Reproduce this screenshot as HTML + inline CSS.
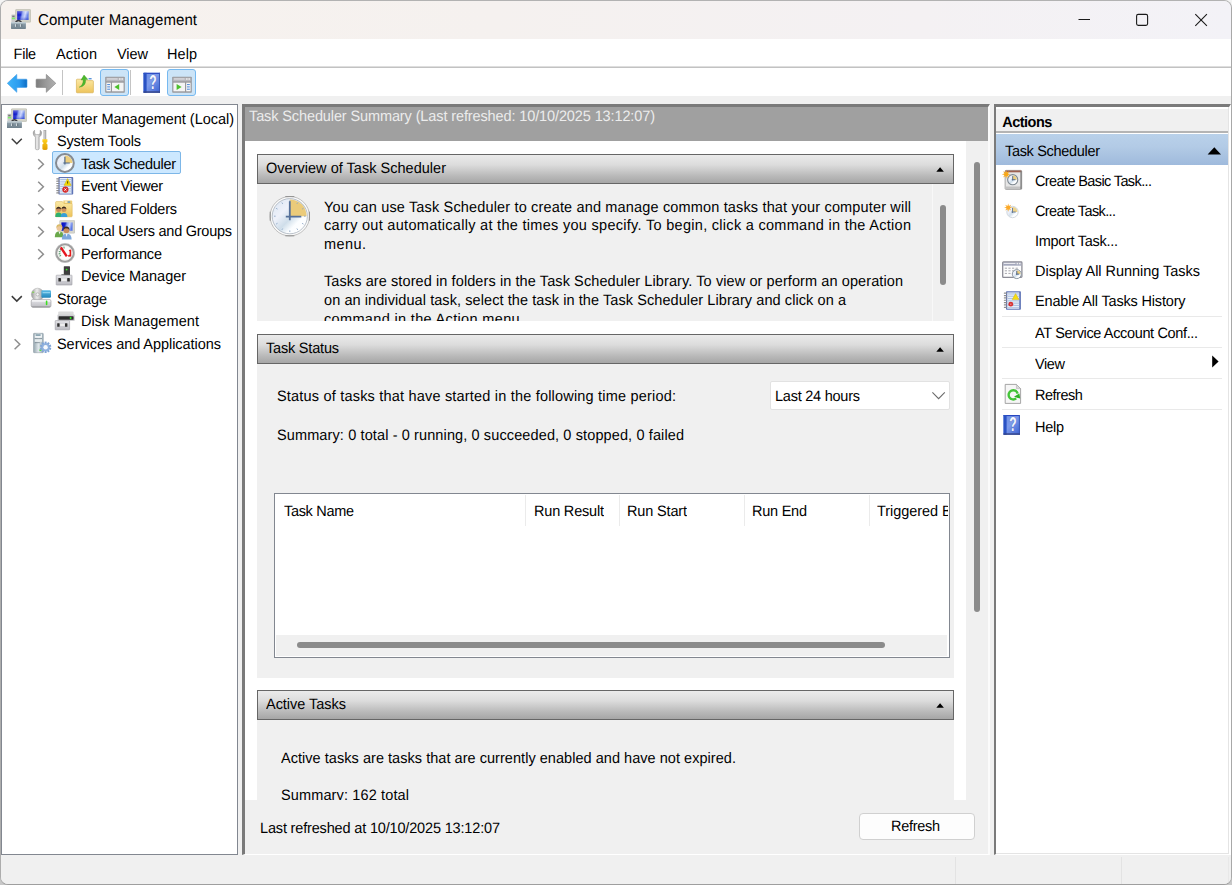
<!DOCTYPE html>
<html lang="en">
<head>
<meta charset="utf-8">
<title>Computer Management</title>
<style>
*{box-sizing:border-box;margin:0;padding:0}
html,body{width:1232px;height:885px;overflow:hidden;background:linear-gradient(180deg,#f4f4f4 0%,#f0f0f0 50%,#c8c8c8 100%)}
body{font-family:"Liberation Sans",sans-serif;font-size:14.5px;color:#000;position:relative}
#win{position:absolute;left:0;top:0;width:1232px;height:885px;border:1px solid;border-color:#b2b2b2 #a8a8a8 #9e9e9e #adadad;border-radius:8px;overflow:hidden;background:#f0f0f0}
#inner{position:absolute;left:-1px;top:-1px;width:1232px;height:885px}
.a{position:absolute}
.t{position:absolute;white-space:pre;line-height:20px;height:20px;text-rendering:geometricPrecision;transform:scaleY(1.04);transform-origin:0 15.02px}
#titlebar{left:0;top:0;width:1232px;height:39px;background:linear-gradient(90deg,#f7f2ee 0%,#f5f1ef 40%,#f4f1f3 75%,#f3f2f7 100%)}
#menubar{left:0;top:39px;width:1232px;height:27px;background:#fff}
#menuline{left:0;top:66px;width:1232px;height:2px;background:linear-gradient(180deg,#dedede 0,#dedede 50%,#c2c2c2 50%,#c2c2c2 100%)}
#toolbar{left:0;top:68px;width:1232px;height:28px;background:#fff}
.tbsep{width:1px;background:#c4c4c4;top:70px;height:25px}
.tbhot{top:69px;height:27px;width:29px;background:#cce4f7;border:1px solid #76b9f0;border-radius:3px}
#left{left:1px;top:104px;width:237px;height:751px;background:#fff;border:1px solid #828790}
#sel{left:52px;top:151px;width:129px;height:23px;background:#cce8ff;border:1px solid #7db7e8;border-radius:2px}
#center{left:242px;top:104px;width:748px;height:751px;background:#f0f0f0;border-top:3px solid #7a7a7a;border-left:3px solid #7a7a7a;border-right:2px solid #fbfbfb;border-bottom:1px solid #fff}
#chead{left:245px;top:107px;width:742.5px;height:34px;background:#a0a0a0}
#cwhite{left:245px;top:141px;width:721px;height:659px;background:#fff}
.sech{left:257px;width:697px;height:30px;border:1px solid #666;background:linear-gradient(180deg,#ebebeb 0%,#dcdcdc 35%,#b9b9b9 75%,#a6a6a6 100%)}
.secb{left:257px;width:697px;background:#f0f0f0}
.tri{width:0;height:0;border-left:3.7px solid transparent;border-right:3.7px solid transparent;border-bottom:4px solid #000}
.thumb{background:#8b8b8b;border-radius:3px}
#combo{left:770px;top:380.5px;width:180px;height:29.5px;background:#fff;border:1px solid #e2e2e2;border-radius:2px}
#list{left:274px;top:493px;width:676px;height:165px;background:#fff;border:1px solid #828790}
.colsep{top:495px;width:1px;height:31px;background:#ebebeb}
#btn{left:859px;top:813px;width:116px;height:27px;background:#fdfdfd;border:1px solid #d0d0d0;border-radius:4px}
#right{left:994px;top:104px;width:237px;height:751px;background:#fff;border-top:3px solid #7a7a7a;border-left:2px solid #7a7a7a;border-right:2px solid #fff;border-bottom:1px solid #fff}
#rinner{left:996px;top:107px;width:233px;height:747px;border-right:1px solid #e4e4e4;border-bottom:1px solid #e4e4e4}
#ahead{left:996px;top:109px;width:232px;height:22px;background:#f0f0f0}
#aline{left:996px;top:131px;width:232px;height:2px;background:#b4b4b4}
#asub{left:996px;top:134px;width:232px;height:31px;background:linear-gradient(180deg,#b9d1ea 0%,#b3cbe6 40%,#9fbadc 100%)}
.asep{left:1002px;width:220px;height:1px;background:#e9e9e9}
#status{left:0;top:855px;width:1232px;height:30px;background:#f0f0f0}
.stsep{top:857px;width:1px;height:27px;background:#e3e3e3}
svg{position:absolute;overflow:visible}
</style>
</head>
<body>
<div id="win">
<div id="inner">
<div class="a" id="titlebar"></div>
<div class="a" id="menubar"></div>
<div class="a" id="menuline"></div>
<div class="a" id="toolbar"></div>
<div class="a tbsep" style="left:62px"></div>
<div class="a tbhot" style="left:100px"></div>
<div class="a tbsep" style="left:130px"></div>
<div class="a tbhot" style="left:167px"></div>

<div class="a" id="left"></div>
<div class="a" id="sel"></div>

<div class="a" id="center"></div>
<div class="a" id="chead"></div>
<div class="a" id="cwhite"></div>
<div class="a sech" style="top:154px"></div>
<div class="a secb" style="top:184px;height:137px"></div>
<div class="a sech" style="top:334px"></div>
<div class="a secb" style="top:364px;height:314px"></div>
<div class="a sech" style="top:690px"></div>
<div class="a secb" style="top:720px;height:80px"></div>
<div class="a" style="left:932px;top:184px;width:1px;height:137px;background:#f8f8f8"></div>
<div class="a thumb" style="left:940px;top:205px;width:6px;height:80px"></div>
<div class="a thumb" style="left:974px;top:162px;width:6px;height:449.5px"></div>
<div class="a" id="combo"></div>
<div class="a" id="list"></div>
<div class="a" style="left:276px;top:635px;width:671px;height:21px;background:#f0f0f0"></div>
<div class="a thumb" style="left:297px;top:642px;width:588px;height:6px"></div>
<div class="a colsep" style="left:525px"></div>
<div class="a colsep" style="left:619px"></div>
<div class="a colsep" style="left:744px"></div>
<div class="a colsep" style="left:869px"></div>
<div class="a" id="btn"></div>

<div class="a" id="right"></div>
<div class="a" id="rinner"></div>
<div class="a" id="ahead"></div>
<div class="a" id="aline"></div>
<div class="a" id="asub"></div>
<div class="a asep" style="top:316px"></div>
<div class="a asep" style="top:347px"></div>
<div class="a asep" style="top:378px"></div>
<div class="a asep" style="top:409px"></div>

<div class="a" id="status"></div>
<div class="a stsep" style="left:955px"></div>
<div class="a stsep" style="left:1121px"></div>
<div class="a stsep" style="left:1228px;background:#e8e8e8"></div>
<svg class="a" style="left:0;top:0" width="1232" height="885" viewBox="0 0 1232 885"><defs>
<linearGradient id="gScreen" x1="0" y1="0" x2="1" y2="0.2"><stop offset="0" stop-color="#0608c4"/><stop offset="0.36" stop-color="#1624cc"/><stop offset="0.52" stop-color="#8ea2f0"/><stop offset="0.74" stop-color="#ccd6fc"/><stop offset="1" stop-color="#5a78e6"/></linearGradient>
<linearGradient id="gScreenV" x1="0" y1="0" x2="0" y2="1"><stop offset="0" stop-color="#ffffff" stop-opacity="0.35"/><stop offset="0.45" stop-color="#ffffff" stop-opacity="0"/><stop offset="1" stop-color="#0010c0" stop-opacity="0.45"/></linearGradient>
<linearGradient id="gBox" x1="0" y1="0" x2="0" y2="1"><stop offset="0" stop-color="#b4c2ca"/><stop offset="0.3" stop-color="#8a9ba6"/><stop offset="1" stop-color="#6f808c"/></linearGradient>
<linearGradient id="gBack" x1="0" y1="0" x2="1" y2="0"><stop offset="0" stop-color="#3fb4f8"/><stop offset="0.6" stop-color="#2a9cf0"/><stop offset="1" stop-color="#0c6cc4"/></linearGradient>
<linearGradient id="gFwd" x1="0" y1="0" x2="1" y2="0"><stop offset="0" stop-color="#7c7c7c"/><stop offset="0.5" stop-color="#9a9a9a"/><stop offset="1" stop-color="#b0b0b0"/></linearGradient>
<linearGradient id="gFolder" x1="0" y1="0" x2="0" y2="1"><stop offset="0" stop-color="#fbe9a4"/><stop offset="1" stop-color="#eec45c"/></linearGradient>
<linearGradient id="gHelp" x1="0" y1="0" x2="1" y2="1"><stop offset="0" stop-color="#6a8ce4"/><stop offset="0.45" stop-color="#7c9aea"/><stop offset="1" stop-color="#3a60d2"/></linearGradient>
<linearGradient id="gFace" x1="0.1" y1="0.1" x2="0.9" y2="0.9"><stop offset="0" stop-color="#dfe8f4"/><stop offset="0.3" stop-color="#eef1fa"/><stop offset="0.55" stop-color="#cfdeea"/><stop offset="0.75" stop-color="#fbfdff"/><stop offset="1" stop-color="#ffffff"/></linearGradient>
<linearGradient id="gMetal" x1="0" y1="0" x2="1" y2="0"><stop offset="0" stop-color="#9a9a9a"/><stop offset="0.45" stop-color="#eeeeee"/><stop offset="1" stop-color="#8e8e8e"/></linearGradient>
<linearGradient id="gYel" x1="0" y1="0" x2="0" y2="1"><stop offset="0" stop-color="#ffd21c"/><stop offset="1" stop-color="#e09c00"/></linearGradient>
<linearGradient id="gGrey" x1="0" y1="0" x2="0" y2="1"><stop offset="0" stop-color="#e4e4e8"/><stop offset="1" stop-color="#bcbcc2"/></linearGradient>
<linearGradient id="gBlueDrv" x1="0" y1="0" x2="0" y2="1"><stop offset="0" stop-color="#5bbbe6"/><stop offset="1" stop-color="#2386ba"/></linearGradient>
<linearGradient id="gTower" x1="0" y1="0" x2="1" y2="0"><stop offset="0" stop-color="#93a4ae"/><stop offset="0.5" stop-color="#dfe7ea"/><stop offset="1" stop-color="#9aaab4"/></linearGradient>
</defs><g transform="translate(11,9)">
<rect x="0.4" y="5.6" width="4" height="8" rx="0.6" fill="#c9cacb"/>
<rect x="1.2" y="6.6" width="2.4" height="1.6" fill="#7a7a7a"/>
<rect x="0.9" y="8.7" width="3.2" height="1.5" fill="#7cf068"/>
<rect x="4.3" y="0.2" width="15.5" height="13.3" rx="0.8" fill="#bcbcae"/>
<rect x="5" y="0.9" width="14.1" height="11.9" rx="0.5" fill="#d2d2c8"/>
<rect x="6.2" y="2.2" width="11.4" height="8.6" fill="url(#gScreen)"/>
<rect x="6.2" y="2.2" width="11.4" height="8.6" fill="url(#gScreenV)"/>
<path d="M4.4 13.4 Q7.4 9.6 10.6 13.4" fill="none" stroke="#3a3a40" stroke-width="1.4"/>
<rect x="0" y="13" width="14.9" height="6.9" rx="0.6" fill="url(#gBox)"/>
<rect x="0" y="13.1" width="14.9" height="1.2" fill="#c3d0d6"/>
<rect x="4" y="15.2" width="1.3" height="2.6" fill="#cfd8dc"/><rect x="5.3" y="15.2" width="0.9" height="2.6" fill="#5c6a74"/>
<rect x="9" y="15.2" width="1.3" height="2.6" fill="#cfd8dc"/><rect x="10.3" y="15.2" width="0.9" height="2.6" fill="#5c6a74"/>
</g>
<g transform="translate(7,108.2)">
<rect x="0.4" y="5.6" width="4" height="8" rx="0.6" fill="#c9cacb"/>
<rect x="1.2" y="6.6" width="2.4" height="1.6" fill="#7a7a7a"/>
<rect x="0.9" y="8.7" width="3.2" height="1.5" fill="#7cf068"/>
<rect x="4.3" y="0.2" width="15.5" height="13.3" rx="0.8" fill="#bcbcae"/>
<rect x="5" y="0.9" width="14.1" height="11.9" rx="0.5" fill="#d2d2c8"/>
<rect x="6.2" y="2.2" width="11.4" height="8.6" fill="url(#gScreen)"/>
<rect x="6.2" y="2.2" width="11.4" height="8.6" fill="url(#gScreenV)"/>
<path d="M4.4 13.4 Q7.4 9.6 10.6 13.4" fill="none" stroke="#3a3a40" stroke-width="1.4"/>
<rect x="0" y="13" width="14.9" height="6.9" rx="0.6" fill="url(#gBox)"/>
<rect x="0" y="13.1" width="14.9" height="1.2" fill="#c3d0d6"/>
<rect x="4" y="15.2" width="1.3" height="2.6" fill="#cfd8dc"/><rect x="5.3" y="15.2" width="0.9" height="2.6" fill="#5c6a74"/>
<rect x="9" y="15.2" width="1.3" height="2.6" fill="#cfd8dc"/><rect x="10.3" y="15.2" width="0.9" height="2.6" fill="#5c6a74"/>
</g>
<path d="M1078.5 19.5 L1090 19.5" stroke="#1a1a1a" stroke-width="1.1"/>
<rect x="1136.6" y="14.4" width="11" height="11" rx="1.6" fill="none" stroke="#1a1a1a" stroke-width="1.1"/>
<path d="M1195.3 14.2 L1206.9 25.8 M1206.9 14.2 L1195.3 25.8" stroke="#1a1a1a" stroke-width="1.1"/>
<path transform="translate(7,74)" d="M0.3 9.3 L9.8 0.4 L9.8 5.2 L19.3 5.2 Q20 5.2 20 5.9 L20 12.7 Q20 13.4 19.3 13.4 L9.8 13.4 L9.8 18.3 Z" fill="url(#gBack)" stroke="#3a9be8" stroke-width="0.6" stroke-linejoin="round"/>
<path transform="translate(36,74)" d="M19.8 9.3 L10.3 0.4 L10.3 5.2 L0.8 5.2 Q0.1 5.2 0.1 5.9 L0.1 12.7 Q0.1 13.4 0.8 13.4 L10.3 13.4 L10.3 18.3 Z" fill="url(#gFwd)" stroke="#7e7e7e" stroke-width="0.6" stroke-linejoin="round"/>
<g transform="translate(76,74.6)">
<path d="M0.4 5.4 Q0.4 4.6 1.2 4.6 L6.4 4.6 L7.6 6 L16.6 6 Q17.4 6 17.4 6.8 L17.4 17.4 Q17.4 18.2 16.6 18.2 L1.2 18.2 Q0.4 18.2 0.4 17.4 Z" fill="url(#gFolder)" stroke="#d4aa48" stroke-width="0.6"/>
<rect x="12.6" y="3.4" width="3" height="1.4" fill="#5a94d8"/>
<path d="M3.2 12.6 Q7.4 10.6 7.2 5.2 L5 5.4 L8 0.4 L11.8 4.8 L9.6 5 Q10 12 3.2 12.6 Z" fill="#4cb82c" stroke="#3a9a20" stroke-width="0.4"/>
</g>
<g transform="translate(105,76.5)">
<rect x="0.2" y="0.2" width="19.6" height="16" rx="0.8" fill="#98989c"/>
<rect x="1.2" y="1.2" width="17.6" height="3.6" fill="#b8b8be"/>
<rect x="2" y="2" width="10.6" height="0.9" fill="#e8e8ec"/>
<rect x="14" y="1.8" width="1.6" height="1.4" fill="#eeeeee"/><rect x="16.4" y="1.8" width="1.6" height="1.4" fill="#eeeeee"/>
<rect x="1.4" y="6.2" width="4.4" height="8.6" fill="#f8f8f8"/><rect x="2.2" y="7.6" width="2.8" height="1" fill="#4a86d8"/><rect x="2.2" y="9.9" width="2.8" height="1" fill="#4a86d8"/><rect x="2.2" y="12.2" width="2.8" height="1" fill="#4a86d8"/><rect x="7" y="6.2" width="11.6" height="8.6" fill="#f4f4f4"/><path d="M14.2 7.4 L14.2 13.6 L9.4 10.5 Z" fill="#4cc02c"/>
</g>
<g transform="translate(143.5,72.8)">
<rect x="0" y="0" width="16.5" height="20" rx="0.8" fill="url(#gHelp)"/>
<rect x="0" y="0" width="16.5" height="1.1" fill="#2846c0"/>
<rect x="0" y="0" width="3.1" height="20" fill="#2a52c4"/>
<rect x="15.5" y="0" width="1" height="20" fill="#3a58b8"/>
<rect x="0" y="18.5" width="16.5" height="1.5" fill="#36478c"/>
<text transform="translate(9.45,16.6) scale(0.8,1.32)" text-anchor="middle" font-family="Liberation Sans, sans-serif" font-weight="700" font-size="15" fill="#f4f6fd" style="paint-order:stroke" stroke="#4a62b4" stroke-width="0.5">?</text>
</g>
<g transform="translate(172,76.5)">
<rect x="0.2" y="0.2" width="19.6" height="16" rx="0.8" fill="#98989c"/>
<rect x="1.2" y="1.2" width="17.6" height="3.6" fill="#b8b8be"/>
<rect x="2" y="2" width="10.6" height="0.9" fill="#e8e8ec"/>
<rect x="14" y="1.8" width="1.6" height="1.4" fill="#eeeeee"/><rect x="16.4" y="1.8" width="1.6" height="1.4" fill="#eeeeee"/>
<rect x="14.2" y="6.2" width="4.4" height="8.6" fill="#f8f8f8"/><rect x="15" y="7.6" width="2.8" height="1" fill="#4a86d8"/><rect x="15" y="9.9" width="2.8" height="1" fill="#4a86d8"/><rect x="15" y="12.2" width="2.8" height="1" fill="#4a86d8"/><rect x="1.4" y="6.2" width="11.6" height="8.6" fill="#f4f4f4"/><path d="M4.6 7.4 L4.6 13.6 L9.6 10.5 Z" fill="#4cc02c"/>
</g>
<path d="M11.8 138.7 L16.8 143.7 L21.8 138.7" fill="none" stroke="#3c3c3c" stroke-width="1.5"/>
<path d="M11.8 296.1 L16.8 301.1 L21.8 296.1" fill="none" stroke="#3c3c3c" stroke-width="1.5"/>
<path d="M38.199999999999996 159.2 L43.4 164.2 L38.199999999999996 169.2" fill="none" stroke="#8e8e8e" stroke-width="1.5"/>
<path d="M38.199999999999996 181.7 L43.4 186.7 L38.199999999999996 191.7" fill="none" stroke="#8e8e8e" stroke-width="1.5"/>
<path d="M38.199999999999996 204.2 L43.4 209.2 L38.199999999999996 214.2" fill="none" stroke="#8e8e8e" stroke-width="1.5"/>
<path d="M38.199999999999996 226.7 L43.4 231.7 L38.199999999999996 236.7" fill="none" stroke="#8e8e8e" stroke-width="1.5"/>
<path d="M38.199999999999996 249.2 L43.4 254.2 L38.199999999999996 259.2" fill="none" stroke="#8e8e8e" stroke-width="1.5"/>
<path d="M14.6 339.2 L19.8 344.2 L14.6 349.2" fill="none" stroke="#8e8e8e" stroke-width="1.5"/>
<g transform="translate(33,130)">
<path d="M2.4 7.2 L2.4 18.6 Q2.4 19.8 4.3 19.8 Q6.2 19.8 6.2 18.6 L6.2 7.2 Q8.8 5.6 8.6 2.6 Q8.4 1 7.2 0.2 L7.2 3.4 L5.6 4.6 L3.2 4.6 L1.6 3.4 L1.6 0.2 Q0.2 1.2 0.2 3 Q0.2 5.8 2.4 7.2 Z" fill="url(#gMetal)" stroke="#8a8a8a" stroke-width="0.5"/>
<rect x="10.9" y="0.2" width="2.1" height="9.2" fill="url(#gMetal)" stroke="#8a8a8a" stroke-width="0.4"/>
<path d="M9.4 9.2 L14.4 9.2 L14.4 12 L13.4 12.8 L13.4 13.6 L14.5 14.4 L14.5 19 Q14.5 19.9 12 19.9 Q9.4 19.9 9.4 19 L9.4 14.4 L10.5 13.6 L10.5 12.8 L9.4 12 Z" fill="url(#gYel)"/>
</g>
<g transform="translate(64.9,163)">
<circle r="8.9" fill="url(#gFace)" stroke="#858b93" stroke-width="2"/>
<path d="M0 0 L0 -7.6000000000000005 A7.6000000000000005 7.6000000000000005 0 0 1 7.6000000000000005 0 Z" fill="#edce7c"/>
<path d="M0 -6.32 L0 1.422 M-1.58 0 L4.898000000000001 0" stroke="#4f6787" stroke-width="1.2" fill="none"/>
</g>
<g transform="translate(56,176.6)">
<rect x="2.4" y="0.3" width="14.8" height="17.7" rx="0.8" fill="#5f74b6"/>
<rect x="3.6" y="1.4" width="11.9" height="15.700000000000001" fill="#e8eef8"/>
<rect x="4.2" y="2.4" width="11.3" height="1.1" fill="#aec2e2"/><rect x="4.2" y="4.7" width="11.3" height="1.1" fill="#aec2e2"/><rect x="4.2" y="7.0" width="11.3" height="1.1" fill="#aec2e2"/><rect x="4.2" y="9.3" width="11.3" height="1.1" fill="#aec2e2"/><rect x="4.2" y="11.6" width="11.3" height="1.1" fill="#aec2e2"/><rect x="4.2" y="13.9" width="11.3" height="1.1" fill="#aec2e2"/><rect x="4.2" y="16.2" width="11.3" height="1.1" fill="#aec2e2"/><rect x="0.2" y="1.60" width="3.4" height="1.2" rx="0.6" fill="#8a8a8e"/><rect x="0.2" y="3.95" width="3.4" height="1.2" rx="0.6" fill="#8a8a8e"/><rect x="0.2" y="6.30" width="3.4" height="1.2" rx="0.6" fill="#8a8a8e"/><rect x="0.2" y="8.65" width="3.4" height="1.2" rx="0.6" fill="#8a8a8e"/><rect x="0.2" y="11.00" width="3.4" height="1.2" rx="0.6" fill="#8a8a8e"/><rect x="0.2" y="13.35" width="3.4" height="1.2" rx="0.6" fill="#8a8a8e"/><rect x="0.2" y="15.70" width="3.4" height="1.2" rx="0.6" fill="#8a8a8e"/>
<path d="M11.6 2 L15.2 8.8 L8 8.8 Z" fill="#f4d800" stroke="#c8a800" stroke-width="0.4"/><rect x="11.2" y="4.6" width="0.9" height="2.4" fill="#4a4000"/><circle cx="9.4" cy="13" r="3.1" fill="#d62a2a"/><path d="M8.3 11.9 L10.5 14.1 M10.5 11.9 L8.3 14.1" stroke="#fff" stroke-width="0.9"/>
</g>
<g transform="translate(55,200)">
<path d="M8.4 0.4 L16.4 0.4 Q17.2 0.4 17.2 1.2 L17.2 4 L8.4 4 Z" fill="#f0cf74"/>
<rect x="9.8" y="1.4" width="2.6" height="1.3" fill="#fff7e0"/><rect x="12.6" y="1.4" width="2.6" height="1.3" fill="#4f92d8"/>
<path d="M0.6 2.4 Q0.6 1.6 1.4 1.6 L7.4 1.6 L8.8 3.4 L16.4 3.4 Q17.2 3.4 17.2 4.2 L17.2 16 Q17.2 16.8 16.4 16.8 L1.4 16.8 Q0.6 16.8 0.6 16 Z" fill="url(#gFolder)" stroke="#d9b04c" stroke-width="0.5"/>
<path d="M0.3 17 Q0.3 12.6 3.6 12.6 Q7 12.6 7 17 Z" fill="#2fb070"/>
<path d="M5.6 17 Q5.6 12.9 9 12.9 Q12.4 12.9 12.4 17 Z" fill="#3a9fd8"/>
<circle cx="3.6" cy="9.6" r="2.5" fill="#c98a5a"/><path d="M1.1 9.2 Q1.4 6.6 3.6 6.7 Q5.9 6.6 6.1 9.2 Q3.6 7.9 1.1 9.2 Z" fill="#3a2a20"/>
<circle cx="8.9" cy="9.4" r="2.5" fill="#cf935f"/><path d="M6.4 9 Q6.7 6.4 8.9 6.5 Q11.2 6.4 11.4 9 Q8.9 7.7 6.4 9 Z" fill="#3a2a20"/>
</g>
<g transform="translate(55,220)">
<rect x="4.4" y="0.2" width="15.6" height="13.2" rx="0.8" fill="#c4c4bc"/>
<rect x="5" y="0.8" width="14.4" height="12" rx="0.5" fill="#d6d6ce"/>
<rect x="6.4" y="2.4" width="11.2" height="8.4" fill="url(#gScreen)"/>
<path d="M-0.2 17.2 Q-0.2 11.2 4.2 11.2 Q8.6 11.2 8.6 17.2 Z" fill="#6aa84a"/>
<path d="M3.6 11.4 L4.6 14.6 L5.6 11.4 Z" fill="#f4f4f4"/>
<circle cx="4.4" cy="8" r="2.9" fill="#ecc79a"/><path d="M1.4 8 Q1 4.2 4.4 4.2 Q7.8 4.2 7.4 8 Q6 5.8 4.4 6.2 Q2.6 5.8 1.4 8 Z" fill="#d9bb6a"/>
<path d="M6.8 19.4 Q6.8 13.4 11.6 13.4 Q16.6 13.4 16.6 19.4 Z" fill="#7da7dc"/>
<path d="M10.6 13.6 L11.6 17 L12.6 13.6 Z" fill="#f4f4f4"/>
<circle cx="11.4" cy="10.2" r="2.9" fill="#c98c5c"/><path d="M8.4 10 Q8.2 6.4 11.4 6.4 Q14.6 6.4 14.4 10 Q13 8 11.4 8.4 Q9.8 8 8.4 10 Z" fill="#3c2c22"/>
</g>
<g transform="translate(65,253)">
<circle r="8.7" fill="#fdfdfb" stroke="#9c9c9c" stroke-width="2.2"/>
<circle r="9.6" fill="none" stroke="#c4c4c4" stroke-width="0.6"/>
<circle r="7.3" fill="none" stroke="#e6e6e2" stroke-width="0.8"/>
<path d="M-3.98 2.30 L-5.54 3.20" stroke="#5f9f74" stroke-width="1.1"/><path d="M-4.56 0.64 L-6.34 0.89" stroke="#5f9f74" stroke-width="1.1"/><path d="M-4.46 -1.11 L-6.21 -1.55" stroke="#5f9f74" stroke-width="1.1"/><path d="M-3.72 -2.70 L-5.18 -3.76" stroke="#5f9f74" stroke-width="1.1"/><path d="M-2.44 -3.90 L-3.39 -5.43" stroke="#5f9f74" stroke-width="1.1"/><path d="M-0.80 -4.53 L-1.11 -6.30" stroke="#5f9f74" stroke-width="1.1"/>
<path d="M3.6 -3 L6.2 -3.4 L6.2 3.4 L3.2 3.8 L3.2 2 L4.6 1.8 L4.6 -1.4 Z" fill="#e01c1c"/>
<path d="M-4.2 -5.6 L1.8 3.4" stroke="#e6161e" stroke-width="2.4"/>
</g>
<g transform="translate(56,266)">
<rect x="7.8" y="0.2" width="6.2" height="9.4" rx="0.5" fill="#3e3e3e"/>
<rect x="5.4" y="8.2" width="3" height="1.4" fill="#6a6a6a"/>
<circle cx="10.6" cy="3.6" r="0.9" fill="#38f028"/>
<rect x="0.2" y="9.2" width="15.8" height="9.8" rx="0.5" fill="url(#gGrey)" stroke="#9c9ca2" stroke-width="0.6"/>
<rect x="2.4" y="12" width="2.6" height="3.6" rx="0.4" fill="#303030"/>
<rect x="11.2" y="12" width="2.6" height="3.6" rx="0.4" fill="#303030"/>
<rect x="5.6" y="12.6" width="5" height="2.4" fill="#eeeeee"/>
</g>
<g transform="translate(31,288)">
<circle cx="6.6" cy="6.4" r="6.2" fill="url(#gMetal)" stroke="#a4a4a4" stroke-width="0.5"/>
<circle cx="6.6" cy="6.4" r="1.6" fill="#f6f6f6" stroke="#8e8e8e" stroke-width="0.5"/>
<rect x="1.2" y="3.6" width="2" height="1.4" fill="#8ad060"/>
<rect x="10.4" y="2.2" width="9.6" height="7.6" rx="1.2" fill="url(#gBlueDrv)"/>
<rect x="11.6" y="4.2" width="7.6" height="1" fill="#9fdaf2"/>
<rect x="0.2" y="11.4" width="19.8" height="8" rx="1.8" fill="url(#gGrey)" stroke="#9a9a9e" stroke-width="0.6"/>
<rect x="0.8" y="12" width="18.6" height="1.8" rx="0.9" fill="#f2f2f4"/>
<rect x="0.8" y="18" width="18.6" height="1.2" rx="0.6" fill="#a4a4a8"/>
<rect x="14.8" y="12.6" width="1.6" height="4.6" rx="0.8" fill="#3ce020"/>
</g>
<g transform="translate(55,311)">
<rect x="3.2" y="0.4" width="15.4" height="9.4" rx="1" fill="#dcdcdc"/>
<rect x="2.4" y="3.4" width="17.4" height="6.6" rx="1" fill="#cfcfd2"/>
<rect x="3.6" y="5.2" width="15" height="3.6" rx="0.6" fill="#2c2c2c"/>
<circle cx="15.6" cy="7" r="1" fill="#30f020"/>
<rect x="0.2" y="9.6" width="14.4" height="9.2" rx="0.5" fill="url(#gGrey)" stroke="#9c9ca2" stroke-width="0.6"/>
<rect x="2.2" y="12.2" width="2.4" height="3.6" rx="0.4" fill="#303030"/>
<rect x="10" y="12.2" width="2.4" height="3.6" rx="0.4" fill="#303030"/>
<rect x="5.2" y="13" width="4.4" height="2" fill="#eeeeee"/>
</g>
<g transform="translate(33,333)">
<rect x="0.5" y="0.3" width="9.8" height="19.4" rx="0.6" fill="url(#gTower)" stroke="#8896a0" stroke-width="0.5"/>
<rect x="1.8" y="1.2" width="7.2" height="3.6" fill="#eef2f4"/><rect x="2.6" y="1.6" width="5" height="0.9" fill="#2a5a70"/>
<rect x="1.8" y="5.8" width="7.2" height="3" fill="#e6ecee"/><rect x="1.8" y="5.4" width="7.2" height="0.7" fill="#6e7c86"/>
<rect x="1.8" y="9.4" width="5" height="0.7" fill="#6e7c86"/>
<rect x="6.4" y="16.4" width="2" height="1.6" fill="#58d848"/>
<g transform="translate(12.6,14.3)"><rect x="-1" y="-5.7" width="2" height="2.4" fill="#7fa4d6" transform="rotate(0)"/><rect x="-1" y="-5.7" width="2" height="2.4" fill="#7fa4d6" transform="rotate(36)"/><rect x="-1" y="-5.7" width="2" height="2.4" fill="#7fa4d6" transform="rotate(72)"/><rect x="-1" y="-5.7" width="2" height="2.4" fill="#7fa4d6" transform="rotate(108)"/><rect x="-1" y="-5.7" width="2" height="2.4" fill="#7fa4d6" transform="rotate(144)"/><rect x="-1" y="-5.7" width="2" height="2.4" fill="#7fa4d6" transform="rotate(180)"/><rect x="-1" y="-5.7" width="2" height="2.4" fill="#7fa4d6" transform="rotate(216)"/><rect x="-1" y="-5.7" width="2" height="2.4" fill="#7fa4d6" transform="rotate(252)"/><rect x="-1" y="-5.7" width="2" height="2.4" fill="#7fa4d6" transform="rotate(288)"/><rect x="-1" y="-5.7" width="2" height="2.4" fill="#7fa4d6" transform="rotate(324)"/><circle r="4" fill="#8eb0de"/><circle r="2.2" fill="#f6f9fd"/></g>
</g>
<g transform="translate(289.8,216.2)">
<circle r="19.7" fill="#fafafa" stroke="#a6a6a6" stroke-width="0.7"/>
<circle r="17.6" fill="url(#gFace)" stroke="#aab2bd" stroke-width="0.8"/>
<path d="M0 0 L0 -16.8 A16.8 16.8 0 0 1 16.8 0 Z" fill="#ebcb7a"/>
<path d="M0.00 -14.20 L0.00 -15.80" stroke="#8da7c6" stroke-width="0.9"/><path d="M7.10 -12.30 L7.90 -13.68" stroke="#8da7c6" stroke-width="0.9"/><path d="M12.30 -7.10 L13.68 -7.90" stroke="#8da7c6" stroke-width="0.9"/><path d="M14.20 -0.00 L15.80 -0.00" stroke="#8da7c6" stroke-width="0.9"/><path d="M12.30 7.10 L13.68 7.90" stroke="#8da7c6" stroke-width="0.9"/><path d="M7.10 12.30 L7.90 13.68" stroke="#8da7c6" stroke-width="0.9"/><path d="M0.00 14.20 L0.00 15.80" stroke="#8da7c6" stroke-width="0.9"/><path d="M-7.10 12.30 L-7.90 13.68" stroke="#8da7c6" stroke-width="0.9"/><path d="M-12.30 7.10 L-13.68 7.90" stroke="#8da7c6" stroke-width="0.9"/><path d="M-14.20 0.00 L-15.80 0.00" stroke="#8da7c6" stroke-width="0.9"/><path d="M-12.30 -7.10 L-13.68 -7.90" stroke="#8da7c6" stroke-width="0.9"/><path d="M-7.10 -12.30 L-7.90 -13.68" stroke="#8da7c6" stroke-width="0.9"/>
<path d="M-4.5 -19.6 L4.5 -19.6 M-4.5 19.6 L4.5 19.6 M-19.6 -4.5 L-19.6 4.5 M19.6 -4.5 L19.6 4.5" stroke="#909090" stroke-width="1" fill="none"/>
<path d="M0 -15 L0 4" stroke="#55709a" stroke-width="1.8"/>
<path d="M-4 0.5 L11.5 0.5" stroke="#55709a" stroke-width="1.8"/>
</g>
<path d="M936.3 171.7 L940.1 167.3 L943.9 171.7 Z" fill="#000"/>
<path d="M936.3 351.7 L940.1 347.3 L943.9 351.7 Z" fill="#000"/>
<path d="M936.3 707.7 L940.1 703.3 L943.9 707.7 Z" fill="#000"/>
<path d="M932.4 392.4 L938.6 398.6 L944.8 392.4" fill="none" stroke="#6a6a6a" stroke-width="1.1"/>
<path d="M1207.6 154.4 L1214.3 147.2 L1221 154.4 Z" fill="#000"/>
<path d="M1212.2 355.6 L1218.6 361.6 L1212.2 367.6 Z" fill="#000"/>
<g transform="translate(1004.8,170.1)">
<rect x="0.3" y="0.3" width="16.6" height="19" rx="1" fill="#e6e6e6" stroke="#8a8a8a" stroke-width="0.7"/>
<rect x="0.6" y="0.4" width="16" height="1.8" fill="#9c6050"/>
<rect x="0.8" y="16.4" width="15.6" height="2.6" fill="#c2c2c2"/>
<rect x="15.6" y="1" width="1.3" height="18" fill="#7c7c7c"/>
<g transform="translate(7.9,9.6)">
<circle r="5.05" fill="url(#gFace)" stroke="#7e8890" stroke-width="1.1"/>
<path d="M0 0 L0 -4.2 A4.2 4.2 0 0 1 4.2 0 Z" fill="#edce7c"/>
<path d="M0 -3.6 L0 0.8099999999999999 M-0.9 0 L2.79 0" stroke="#4f6787" stroke-width="0.9" fill="none"/>
</g>
<polygon points="1.40,-0.20 2.11,2.49 4.51,1.09 3.11,3.49 5.80,4.20 3.11,4.91 4.51,7.31 2.11,5.91 1.40,8.60 0.69,5.91 -1.71,7.31 -0.31,4.91 -3.00,4.20 -0.31,3.49 -1.71,1.09 0.69,2.49" fill="#f8a818"/>
</g>
<g transform="translate(1006,204)" opacity="0.9">
<g transform="translate(6.5,8)">
<circle r="5.7" fill="url(#gFace)" stroke="#cfd6dc" stroke-width="1"/>
<path d="M0 0 L0 -4.9 A4.9 4.9 0 0 1 4.9 0 Z" fill="#edce7c"/>
<path d="M0 -4.16 L0 0.9359999999999999 M-1.04 0 L3.224 0" stroke="#4f6787" stroke-width="0.9" fill="none"/>
</g>
<polygon points="2.20,-0.60 2.88,1.97 5.17,0.63 3.83,2.92 6.40,3.60 3.83,4.28 5.17,6.57 2.88,5.23 2.20,7.80 1.52,5.23 -0.77,6.57 0.57,4.28 -2.00,3.60 0.57,2.92 -0.77,0.63 1.52,1.97" fill="#fca010"/>
</g>
<g transform="translate(1002.2,261.5)">
<rect x="0.5" y="0.5" width="19.2" height="15.4" rx="0.8" fill="#fdfdfd" stroke="#8c8c96" stroke-width="1.3"/>
<rect x="1" y="1" width="18.2" height="3.2" fill="#a4a8bc"/>
<rect x="1.6" y="1.6" width="11.6" height="0.9" fill="#f0f0f4"/>
<rect x="14.4" y="1.4" width="1.6" height="1.4" fill="#f0f0f0"/><rect x="16.8" y="1.4" width="1.6" height="1.4" fill="#f0f0f0"/>
<rect x="2.6" y="6.2" width="2.2" height="1" fill="#a8a8ae"/><rect x="6.2" y="6.2" width="2.2" height="1" fill="#a8a8ae"/><rect x="9.8" y="6.2" width="2.2" height="1" fill="#a8a8ae"/><rect x="13.4" y="6.2" width="2.2" height="1" fill="#a8a8ae"/><rect x="2.6" y="8.8" width="2.2" height="1" fill="#a8a8ae"/><rect x="6.2" y="8.8" width="2.2" height="1" fill="#a8a8ae"/><rect x="9.8" y="8.8" width="2.2" height="1" fill="#a8a8ae"/><rect x="13.4" y="8.8" width="2.2" height="1" fill="#a8a8ae"/><rect x="2.6" y="11.4" width="2.2" height="1" fill="#a8a8ae"/><rect x="6.2" y="11.4" width="2.2" height="1" fill="#a8a8ae"/><rect x="9.8" y="11.4" width="2.2" height="1" fill="#a8a8ae"/><rect x="13.4" y="11.4" width="2.2" height="1" fill="#a8a8ae"/>
<g transform="translate(14.6,12.6)">
<circle r="4.5" fill="url(#gFace)" stroke="#8e98a2" stroke-width="1"/>
<path d="M0 0 L0 -3.7 A3.7 3.7 0 0 1 3.7 0 Z" fill="#edce7c"/>
<path d="M0 -3.2 L0 0.72 M-0.8 0 L2.48 0" stroke="#4f6787" stroke-width="1" fill="none"/>
</g>
</g>
<g transform="translate(1003.6,291)">
<rect x="2.4" y="0.3" width="14.900000000000002" height="18.4" rx="0.8" fill="#5f74b6"/>
<rect x="3.6" y="1.4" width="12.000000000000002" height="16.4" fill="#e8eef8"/>
<rect x="4.2" y="2.4" width="11.400000000000002" height="1.1" fill="#aec2e2"/><rect x="4.2" y="4.7" width="11.400000000000002" height="1.1" fill="#aec2e2"/><rect x="4.2" y="7.0" width="11.400000000000002" height="1.1" fill="#aec2e2"/><rect x="4.2" y="9.3" width="11.400000000000002" height="1.1" fill="#aec2e2"/><rect x="4.2" y="11.6" width="11.400000000000002" height="1.1" fill="#aec2e2"/><rect x="4.2" y="13.9" width="11.400000000000002" height="1.1" fill="#aec2e2"/><rect x="4.2" y="16.2" width="11.400000000000002" height="1.1" fill="#aec2e2"/><rect x="0.2" y="1.60" width="3.4" height="1.2" rx="0.6" fill="#8a8a8e"/><rect x="0.2" y="3.95" width="3.4" height="1.2" rx="0.6" fill="#8a8a8e"/><rect x="0.2" y="6.30" width="3.4" height="1.2" rx="0.6" fill="#8a8a8e"/><rect x="0.2" y="8.65" width="3.4" height="1.2" rx="0.6" fill="#8a8a8e"/><rect x="0.2" y="11.00" width="3.4" height="1.2" rx="0.6" fill="#8a8a8e"/><rect x="0.2" y="13.35" width="3.4" height="1.2" rx="0.6" fill="#8a8a8e"/><rect x="0.2" y="15.70" width="3.4" height="1.2" rx="0.6" fill="#8a8a8e"/>
<path d="M12 2.6 L15.4 8.6 L8.6 8.6 Z" fill="#f6dc10" stroke="#d0b000" stroke-width="0.4"/><circle cx="7.2" cy="13.2" r="2.4" fill="#d83030"/><rect x="6.6" y="12.6" width="1.2" height="1.2" fill="#f0a0a0"/>
</g>
<g transform="translate(1004.8,384)">
<path d="M0.4 0.4 L11.6 0.4 L15.8 4.6 L15.8 19.4 L0.4 19.4 Z" fill="#f6f6f6" stroke="#909090" stroke-width="0.8"/>
<path d="M11.6 0.4 L11.6 4.6 L15.8 4.6 Z" fill="#d8d8d8" stroke="#a8a8a8" stroke-width="0.5"/>
<path d="M11.4 14.4 A4.6 4.6 0 1 1 12.9 9.6" fill="none" stroke="#44c438" stroke-width="2.4"/>
<path d="M9.2 12.8 L15.4 14.6 L14.6 9.4 Z" fill="#2cb424"/>
</g>
<g transform="translate(1003.5,415)">
<rect x="0" y="0" width="16.4" height="19.8" rx="0.8" fill="url(#gHelp)"/>
<rect x="0" y="0" width="16.4" height="1.1" fill="#2846c0"/>
<rect x="0" y="0" width="3.1" height="19.8" fill="#2a52c4"/>
<rect x="15.399999999999999" y="0" width="1" height="19.8" fill="#3a58b8"/>
<rect x="0" y="18.3" width="16.4" height="1.5" fill="#36478c"/>
<text transform="translate(9.399999999999999,16.400000000000002) scale(0.8,1.32)" text-anchor="middle" font-family="Liberation Sans, sans-serif" font-weight="700" font-size="15" fill="#f4f6fd" style="paint-order:stroke" stroke="#4a62b4" stroke-width="0.5">?</text>
</g></svg>
<span class="t" style="left:38.00px;top:11px;font-size:15px;transform-origin:0 15.20px;letter-spacing:0.078px;">Computer Management</span>
<span class="t" style="left:13.60px;top:45px;letter-spacing:-0.258px;">File</span>
<span class="t" style="left:56.00px;top:45px;letter-spacing:0.138px;">Action</span>
<span class="t" style="left:117.00px;top:45px;letter-spacing:-0.057px;">View</span>
<span class="t" style="left:167.00px;top:45px;letter-spacing:0.057px;">Help</span>
<span class="t" style="left:34.00px;top:110px;letter-spacing:-0.026px;">Computer Management (Local)</span>
<span class="t" style="left:57.00px;top:132px;letter-spacing:-0.179px;">System Tools</span>
<span class="t" style="left:81.00px;top:155px;letter-spacing:-0.319px;">Task Scheduler</span>
<span class="t" style="left:81.00px;top:177px;letter-spacing:-0.288px;">Event Viewer</span>
<span class="t" style="left:81.00px;top:200px;letter-spacing:-0.242px;">Shared Folders</span>
<span class="t" style="left:81.00px;top:222px;letter-spacing:-0.255px;">Local Users and Groups</span>
<span class="t" style="left:81.00px;top:245px;letter-spacing:-0.202px;">Performance</span>
<span class="t" style="left:81.00px;top:267px;letter-spacing:-0.044px;">Device Manager</span>
<span class="t" style="left:57.00px;top:290px;letter-spacing:-0.133px;">Storage</span>
<span class="t" style="left:81.00px;top:312px;letter-spacing:0.081px;">Disk Management</span>
<span class="t" style="left:57.00px;top:335px;letter-spacing:-0.052px;">Services and Applications</span>
<span class="t" style="left:249.00px;top:107px;letter-spacing:-0.113px;color:#ececec;">Task Scheduler Summary (Last refreshed: 10/10/2025 13:12:07)</span>
<span class="t" style="left:266.00px;top:159px;letter-spacing:0.022px;">Overview of Task Scheduler</span>
<span class="t" style="left:266.00px;top:339px;letter-spacing:-0.195px;">Task Status</span>
<span class="t" style="left:266.00px;top:695px;letter-spacing:-0.030px;">Active Tasks</span>
<span class="t" style="left:324.00px;top:198px;letter-spacing:0.158px;">You can use Task Scheduler to create and manage common tasks that your computer will</span>
<span class="t" style="left:324.00px;top:216px;letter-spacing:0.293px;">carry out automatically at the times you specify. To begin, click a command in the Action</span>
<span class="t" style="left:324.00px;top:235px;letter-spacing:0.422px;">menu.</span>
<span class="t" style="left:324.00px;top:272px;letter-spacing:0.094px;">Tasks are stored in folders in the Task Scheduler Library. To view or perform an operation</span>
<span class="t" style="left:324.00px;top:291px;letter-spacing:0.078px;">on an individual task, select the task in the Task Scheduler Library and click on a</span>
<span class="t" style="left:324.00px;top:310px;letter-spacing:0.345px;clip-path:inset(-4px 0 8.85px 0);">command in the Action menu.</span>
<span class="t" style="left:277.00px;top:387px;letter-spacing:0.195px;">Status of tasks that have started in the following time period:</span>
<span class="t" style="left:775.00px;top:387px;letter-spacing:-0.240px;">Last 24 hours</span>
<span class="t" style="left:277.00px;top:426px;letter-spacing:0.118px;">Summary: 0 total - 0 running, 0 succeeded, 0 stopped, 0 failed</span>
<span class="t" style="left:284.00px;top:502px;letter-spacing:-0.316px;">Task Name</span>
<span class="t" style="left:534.00px;top:502px;letter-spacing:-0.193px;">Run Result</span>
<span class="t" style="left:627.00px;top:502px;letter-spacing:-0.156px;">Run Start</span>
<span class="t" style="left:752.00px;top:502px;letter-spacing:-0.240px;">Run End</span>
<span class="t" style="left:877.00px;top:502px;letter-spacing:-0.043px;width:71.00px;overflow:hidden;">Triggered By</span>
<span class="t" style="left:281.00px;top:749px;letter-spacing:0.040px;">Active tasks are tasks that are currently enabled and have not expired.</span>
<span class="t" style="left:281.00px;top:786px;letter-spacing:0.133px;clip-path:inset(-4px 0 5.96px 0);">Summary: 162 total</span>
<span class="t" style="left:260.00px;top:819px;letter-spacing:-0.164px;">Last refreshed at 10/10/2025 13:12:07</span>
<span class="t" style="left:891.00px;top:817px;letter-spacing:-0.297px;">Refresh</span>
<span class="t" style="left:1002.30px;top:113px;letter-spacing:-0.529px;font-weight:700;">Actions</span>
<span class="t" style="left:1005.00px;top:142px;letter-spacing:-0.319px;">Task Scheduler</span>
<span class="t" style="left:1035.00px;top:172px;letter-spacing:-0.615px;">Create Basic Task...</span>
<span class="t" style="left:1035.00px;top:202px;letter-spacing:-0.631px;">Create Task...</span>
<span class="t" style="left:1035.00px;top:232px;letter-spacing:-0.290px;">Import Task...</span>
<span class="t" style="left:1035.00px;top:262px;letter-spacing:-0.032px;">Display All Running Tasks</span>
<span class="t" style="left:1035.00px;top:292px;letter-spacing:-0.168px;">Enable All Tasks History</span>
<span class="t" style="left:1035.00px;top:324px;letter-spacing:-0.357px;">AT Service Account Conf...</span>
<span class="t" style="left:1035.00px;top:355px;letter-spacing:-0.391px;">View</span>
<span class="t" style="left:1035.00px;top:386px;letter-spacing:-0.497px;">Refresh</span>
<span class="t" style="left:1035.00px;top:418px;letter-spacing:-0.276px;">Help</span>
</div>
</div>
</body>
</html>
